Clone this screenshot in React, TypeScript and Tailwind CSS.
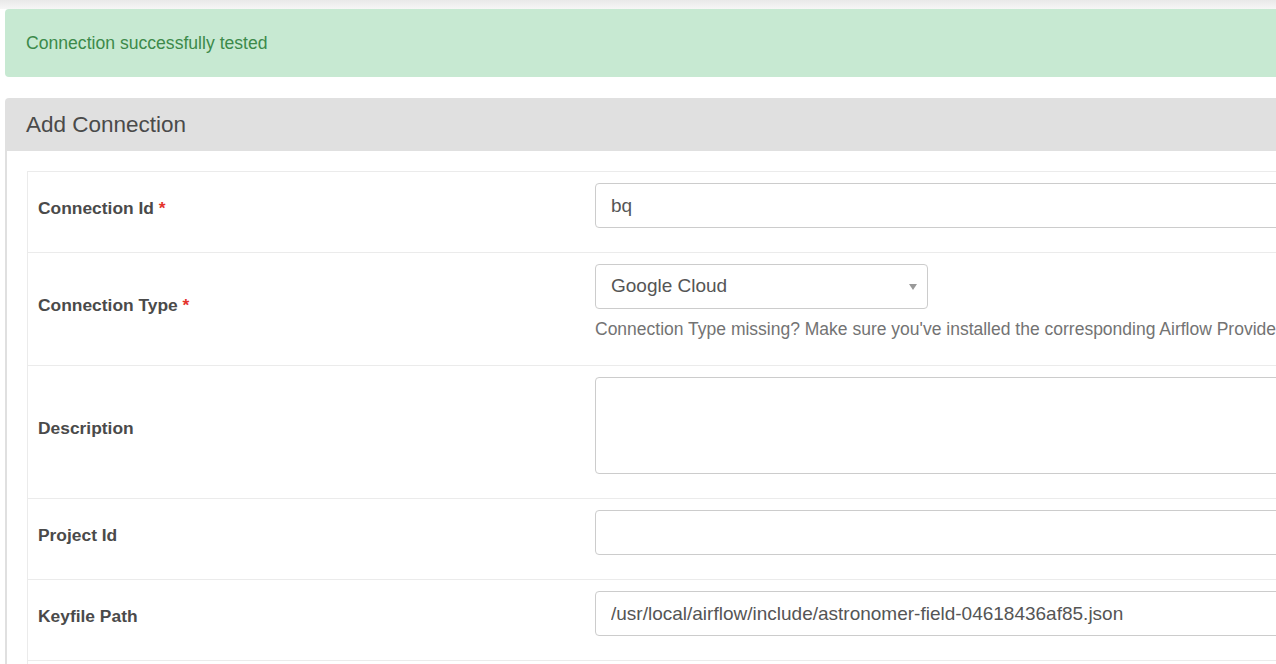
import React from "react";

const font = "font-['Liberation_Sans',Arial,Helvetica,sans-serif]";

function Label({ text, required }: { text: string; required?: boolean }) {
  return (
    <span className="text-[17.4px] font-bold text-[#4a4a4a]">
      {text}
      {required && <span className="text-[#e4332b]"> *</span>}
    </span>
  );
}

function Row({
  label,
  required,
  children,
}: {
  label: string;
  required?: boolean;
  children: React.ReactNode;
}) {
  return (
    <div className="flex border-t border-[#ebebeb]">
      <div className="flex w-[567px] shrink-0 items-center pl-[10px] pb-[8px]">
        <Label text={label} required={required} />
      </div>
      <div className="flex-1 pt-[11px] pb-[24px]">{children}</div>
    </div>
  );
}

const inputCls =
  "block h-[45px] w-full rounded-[4px] border border-[#cccccc] bg-white px-[15px] text-[19px] text-[#555555] outline-none";

export default function App() {
  return (
    <div className={`${font} h-[664px] w-[1276px] overflow-hidden bg-white`}>
      <div className="h-[9px] bg-gradient-to-b from-[#e9e9e9] to-[#f6f6f6]" />

      <div className="ml-[5px] flex h-[68px] w-[1400px] items-center rounded-[4px] bg-[#c7e9d2] pl-[21px] pt-[1px] text-[17.6px] text-[#3c8a4a]">
        Connection successfully tested
      </div>

      <div className="ml-[5px] mt-[21px] w-[1400px]">
        <div className="flex h-[53px] items-center rounded-t-[4px] bg-[#e0e0e0] pl-[21px] text-[22.5px] text-[#4a4a4a]">
          Add Connection
        </div>
        <div className="border-l-2 border-[#e0e0e0] pl-[20px] pt-[20px]">
          <div className="border-l border-[#ebebeb]">
            <Row label="Connection Id" required>
              <input className={inputCls} defaultValue="bq" readOnly />
            </Row>
            <Row label="Connection Type" required>
              <div className="relative flex h-[45px] w-[333px] items-center rounded-[4px] border border-[#cccccc] px-[15px] text-[19px] text-[#555555]">
                Google Cloud
                <svg
                  className="absolute right-[10px] top-[19px]"
                  width="8"
                  height="6"
                  viewBox="0 0 8 6"
                >
                  <path d="M0 0 L8 0 L4 6 Z" fill="#999999" />
                </svg>
              </div>
              <p className="mt-[8px] whitespace-nowrap text-[17.5px] leading-[24px] text-[#737373]">
                Connection Type missing? Make sure you've installed the corresponding Airflow Provider Package.
              </p>
            </Row>
            <Row label="Description">
              <textarea className="block h-[97px] w-full resize-none rounded-[4px] border border-[#cccccc] px-[15px] py-[8px] text-[19px] text-[#555555] outline-none" />
            </Row>
            <Row label="Project Id">
              <input className={inputCls} defaultValue="" readOnly />
            </Row>
            <Row label="Keyfile Path">
              <input
                className={inputCls}
                defaultValue="/usr/local/airflow/include/astronomer-field-04618436af85.json"
                readOnly
              />
            </Row>
            <Row label="Keyfile JSON">
              <input className={inputCls} defaultValue="" readOnly />
            </Row>
          </div>
        </div>
      </div>
    </div>
  );
}
